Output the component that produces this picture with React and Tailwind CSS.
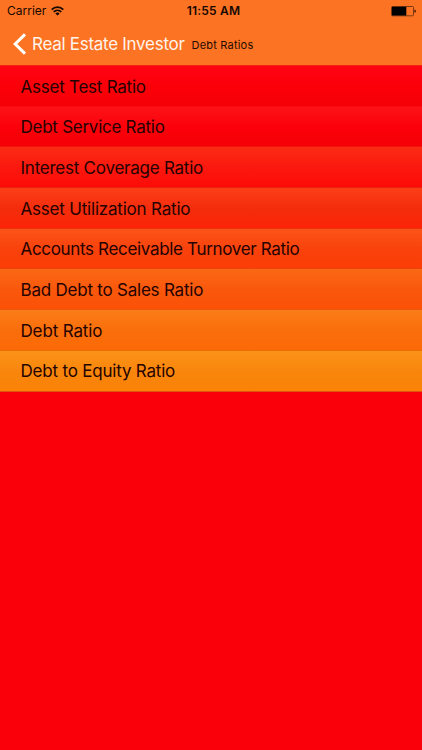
const ratios = [
  { name: 'Asset Test Ratio', bg: 'from-[#fe0313] via-[#fc0009] to-[#f50006] border-[#fa0a10]', tracking: 'tracking-[-0.24px]' },
  { name: 'Debt Service Ratio', bg: 'from-[#fd1217] via-[#fc000b] to-[#f50006] border-[#f0140c]', tracking: 'tracking-[-0.26px]' },
  { name: 'Interest Coverage Ratio', bg: 'from-[#fb2b15] via-[#fb180e] to-[#fe0a08] border-[#e9220c]', tracking: 'tracking-[-0.24px]' },
  { name: 'Asset Utilization Ratio', bg: 'from-[#fb3e17] via-[#f42d0c] to-[#fc2407] border-[#e8330c]', tracking: 'tracking-[-0.2px]' },
  { name: 'Accounts Receivable Turnover Ratio', bg: 'from-[#fc5318] via-[#f9420c] to-[#fc3c06] border-[#e9450c]', tracking: 'tracking-[-0.33px]' },
  { name: 'Bad Debt to Sales Ratio', bg: 'from-[#fb6815] via-[#f9580c] to-[#fb5107] border-[#ea580c]', tracking: 'tracking-[-0.22px]' },
  { name: 'Debt Ratio', bg: 'from-[#fb7d17] via-[#f96e0b] to-[#fc6a06] border-[#ec6c0c]', tracking: 'tracking-[-0.15px]' },
  { name: 'Debt to Equity Ratio', bg: 'from-[#fb9317] via-[#f9860c] to-[#fa8207] border-[#e0560c]', tracking: 'tracking-[-0.2px]' },
];

function WifiIcon() {
  return (
    <svg width="13" height="10" viewBox="0 0 13 10" fill="none" stroke="#160800" strokeWidth="1.8">
      <path d="M0.7 3.6C4 0.3 9 0.3 12.3 3.6" />
      <path d="M2.7 5.9C4.9 3.8 8.1 3.8 10.3 5.9" />
      <path d="M6.5 9.6L4.3 7.4C5.6 6.2 7.4 6.2 8.7 7.4Z" fill="#160800" stroke="none" />
    </svg>
  );
}

function BatteryIcon() {
  return (
    <svg width="26" height="11" viewBox="0 0 26 11">
      <rect x="0.5" y="0.5" width="22" height="9.3" rx="1" fill="none" stroke="#5c2a0d" strokeWidth="0.8" />
      <rect x="1" y="0.8" width="14.3" height="8.7" fill="#000" />
      <path d="M23.5 3.5C25.3 3.7 25.3 6.6 23.5 6.8Z" fill="#2b1206" />
    </svg>
  );
}

function StatusBar() {
  return (
    <div className="grid h-[22px] grid-cols-[1fr_auto_1fr] items-center pl-[7px] pr-[5px] text-[#160800]">
      <div className="flex items-center gap-[5px]">
        <span className="text-[12px] leading-[22px]">Carrier</span>
        <WifiIcon />
      </div>
      <span className="ml-[3px] text-[12px] font-semibold leading-[22px] tracking-[0.2px]">11:55 AM</span>
      <div className="flex justify-end">
        <BatteryIcon />
      </div>
    </div>
  );
}

function NavBar() {
  return (
    <div className="flex h-[43px] items-center pl-3">
      <svg width="15" height="22" viewBox="0 0 15 22" fill="none" stroke="#fff" strokeWidth="3">
        <path d="M13 1.4L3.2 11L13 20.6" />
      </svg>
      <span className="ml-[5px] text-[17px] leading-[22px] tracking-[-0.28px] text-[#fff3ea]">Real Estate Investor</span>
      <span className="ml-[7px] mt-[3px] text-[11px] leading-[14px] tracking-[0.2px] text-[#240b00]">Debt Ratios</span>
    </div>
  );
}

export default function App() {
  return (
    <div className="flex h-[750px] w-[422px] flex-col overflow-hidden bg-[#f9000b] font-['Inter',sans-serif]">
      <header className="h-[66px] shrink-0 border-b border-[#f5200f] bg-[#fd7324]">
        <StatusBar />
        <NavBar />
      </header>
      <ul className="h-[325.6px] shrink-0">
        {ratios.map(r => (
          <li
            key={r.name}
            className={`flex h-[40.7px] items-center border-b bg-linear-to-b pl-[20.5px] pt-[3px] text-[17px] text-[#240300] ${r.tracking} ${r.bg}`}
          >
            <span>{r.name}</span>
          </li>
        ))}
      </ul>
    </div>
  );
}
